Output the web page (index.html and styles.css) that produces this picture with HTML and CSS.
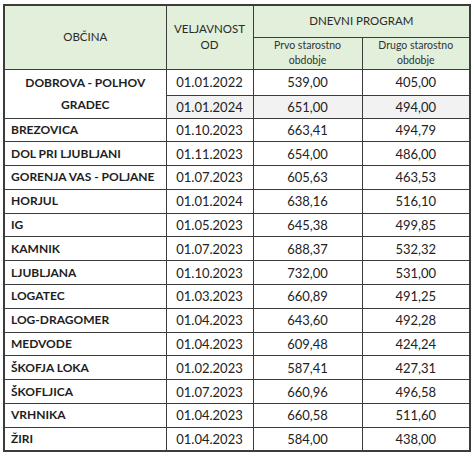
FILE: index.html
```html
<!DOCTYPE html>
<html lang="sl">
<head>
<meta charset="utf-8">
<title>Občine</title>
<link rel="stylesheet" href="styles.css">
</head>
<body>
<table class="grid">
  <colgroup>
    <col class="c-name">
    <col class="c-date">
    <col class="c-v1">
    <col class="c-v2">
  </colgroup>
  <thead>
    <tr class="h1">
      <th rowspan="2" class="hcell">OBČINA</th>
      <th rowspan="2" class="hcell">VELJAVNOST<br>OD</th>
      <th colspan="2" class="hcell">DNEVNI PROGRAM</th>
    </tr>
    <tr class="h2">
      <th class="hcell small">Prvo starostno<br>obdobje</th>
      <th class="hcell small">Drugo starostno<br>obdobje</th>
    </tr>
  </thead>
  <tbody>
    <tr class="sub1">
      <td rowspan="2" class="name center">DOBROVA - POLHOV<br>GRADEC</td>
      <td>01.01.2022</td><td>539,00</td><td>405,00</td>
    </tr>
    <tr class="sub2 grey">
      <td>01.01.2024</td><td>651,00</td><td>494,00</td>
    </tr>
    <tr><td class="name">BREZOVICA</td><td>01.10.2023</td><td>663,41</td><td>494,79</td></tr>
    <tr><td class="name">DOL PRI LJUBLJANI</td><td>01.11.2023</td><td>654,00</td><td>486,00</td></tr>
    <tr><td class="name">GORENJA VAS - POLJANE</td><td>01.07.2023</td><td>605,63</td><td>463,53</td></tr>
    <tr><td class="name">HORJUL</td><td>01.01.2024</td><td>638,16</td><td>516,10</td></tr>
    <tr><td class="name">IG</td><td>01.05.2023</td><td>645,38</td><td>499,85</td></tr>
    <tr><td class="name">KAMNIK</td><td>01.07.2023</td><td>688,37</td><td>532,32</td></tr>
    <tr><td class="name">LJUBLJANA</td><td>01.10.2023</td><td>732,00</td><td>531,00</td></tr>
    <tr><td class="name">LOGATEC</td><td>01.03.2023</td><td>660,89</td><td>491,25</td></tr>
    <tr><td class="name">LOG-DRAGOMER</td><td>01.04.2023</td><td>643,60</td><td>492,28</td></tr>
    <tr><td class="name">MEDVODE</td><td>01.04.2023</td><td>609,48</td><td>424,24</td></tr>
    <tr><td class="name">ŠKOFJA LOKA</td><td>01.02.2023</td><td>587,41</td><td>427,31</td></tr>
    <tr><td class="name">ŠKOFLJICA</td><td>01.07.2023</td><td>660,96</td><td>496,58</td></tr>
    <tr><td class="name">VRHNIKA</td><td>01.04.2023</td><td>660,58</td><td>511,60</td></tr>
    <tr><td class="name">ŽIRI</td><td>01.04.2023</td><td>584,00</td><td>438,00</td></tr>
  </tbody>
</table>
</body>
</html>
```
FILE: styles.css
```css
html, body {
  margin: 0;
  padding: 0;
  background: #ffffff;
}
body {
  padding: 4px 0 0 3px;
  font-family: Lato, "Open Sans", "Liberation Sans", sans-serif;
  color: #222222;
}
.grid {
  border-collapse: collapse;
  table-layout: fixed;
  width: 466px;
  border: 2px solid #3c3c3c;
}
.c-name { width: 162px; }
.c-date { width: 87px; }
.c-v1 { width: 109px; }
.c-v2 { width: 108px; }

.grid th, .grid td {
  border: 1px solid #3c3c3c;
  padding: 0;
  text-align: center;
  vertical-align: middle;
  font-size: 13px;
  line-height: 18px;
  font-weight: normal;
  white-space: nowrap;
  box-sizing: border-box;
}
.grid th.hcell {
  background: #e2efda;
  font-size: 11.5px;
  line-height: 16px;
  color: #2a2a2a;
}
.grid th.small {
  font-size: 10.5px;
  line-height: 15px;
  color: #333333;
}
.grid thead tr.h1 { height: 32px; }
.grid thead tr.h2 { height: 32px; }
.grid tbody tr { height: 23.8px; }
.grid tbody tr.sub1 { height: 26px; }
.grid tbody tr.sub2 { height: 23px; }
.grey td { background: #f2f2f2; }
.grid td.name {
  text-align: left;
  font-weight: 700;
  padding-left: 6px;
  font-size: 12px;
  color: #1e1e1e;
}
.grid td.name.center {
  text-align: center;
  padding-left: 0;
  line-height: 22px;
}
```
